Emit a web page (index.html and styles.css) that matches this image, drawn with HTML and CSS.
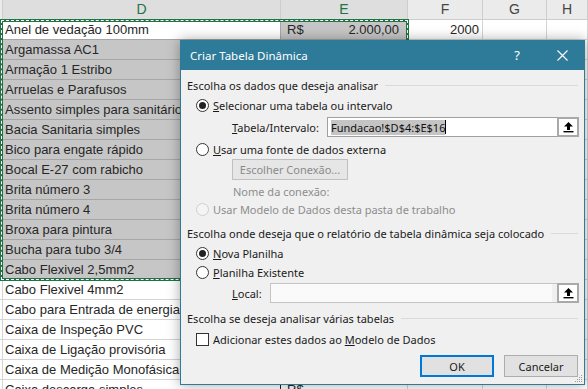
FILE: index.html
```html
<!DOCTYPE html>
<html lang="pt-BR">
<head>
    <meta charset="UTF-8">
    <title>Criar Tabela Dinâmica</title>
    <link rel="stylesheet" href="styles.css">
</head>
<body>
    <div class="sheet">
        <div class="row head">
            <div class="cell rh"></div>
            <div class="cell c-d on">D</div>
            <div class="cell c-e on">E</div>
            <div class="cell c-f">F</div>
            <div class="cell c-g">G</div>
            <div class="cell c-h">H</div>
        </div>
        <div class="row">
            <div class="cell rh"></div>
            <div class="cell c-d sel active">Anel de vedação 100mm</div>
            <div class="cell c-e sel money"><span>R$</span><span>2.000,00</span></div>
            <div class="cell c-f num">2000</div>
            <div class="cell c-g"></div>
            <div class="cell c-h"></div>
        </div>
        <div class="row"><div class="cell rh"></div><div class="cell c-d sel">Argamassa AC1</div><div class="cell c-e sel"></div><div class="cell c-f"></div><div class="cell c-g"></div><div class="cell c-h"></div></div>
        <div class="row"><div class="cell rh"></div><div class="cell c-d sel">Armação 1 Estribo</div><div class="cell c-e sel"></div><div class="cell c-f"></div><div class="cell c-g"></div><div class="cell c-h"></div></div>
        <div class="row"><div class="cell rh"></div><div class="cell c-d sel">Arruelas e Parafusos</div><div class="cell c-e sel"></div><div class="cell c-f"></div><div class="cell c-g"></div><div class="cell c-h"></div></div>
        <div class="row"><div class="cell rh"></div><div class="cell c-d sel">Assento simples para sanitário</div><div class="cell c-e sel"></div><div class="cell c-f"></div><div class="cell c-g"></div><div class="cell c-h"></div></div>
        <div class="row"><div class="cell rh"></div><div class="cell c-d sel">Bacia Sanitaria simples</div><div class="cell c-e sel"></div><div class="cell c-f"></div><div class="cell c-g"></div><div class="cell c-h"></div></div>
        <div class="row"><div class="cell rh"></div><div class="cell c-d sel">Bico para engate rápido</div><div class="cell c-e sel"></div><div class="cell c-f"></div><div class="cell c-g"></div><div class="cell c-h"></div></div>
        <div class="row"><div class="cell rh"></div><div class="cell c-d sel">Bocal E-27 com rabicho</div><div class="cell c-e sel"></div><div class="cell c-f"></div><div class="cell c-g"></div><div class="cell c-h"></div></div>
        <div class="row"><div class="cell rh"></div><div class="cell c-d sel">Brita número 3</div><div class="cell c-e sel"></div><div class="cell c-f"></div><div class="cell c-g"></div><div class="cell c-h"></div></div>
        <div class="row"><div class="cell rh"></div><div class="cell c-d sel">Brita número 4</div><div class="cell c-e sel"></div><div class="cell c-f"></div><div class="cell c-g"></div><div class="cell c-h"></div></div>
        <div class="row"><div class="cell rh"></div><div class="cell c-d sel">Broxa para pintura</div><div class="cell c-e sel"></div><div class="cell c-f"></div><div class="cell c-g"></div><div class="cell c-h"></div></div>
        <div class="row"><div class="cell rh"></div><div class="cell c-d sel">Bucha para tubo 3/4</div><div class="cell c-e sel"></div><div class="cell c-f"></div><div class="cell c-g"></div><div class="cell c-h"></div></div>
        <div class="row"><div class="cell rh"></div><div class="cell c-d sel">Cabo Flexivel 2,5mm2</div><div class="cell c-e sel"></div><div class="cell c-f"></div><div class="cell c-g"></div><div class="cell c-h"></div></div>
        <div class="row"><div class="cell rh"></div><div class="cell c-d edge">Cabo Flexivel 4mm2</div><div class="cell c-e"></div><div class="cell c-f"></div><div class="cell c-g"></div><div class="cell c-h"></div></div>
        <div class="row"><div class="cell rh"></div><div class="cell c-d edge">Cabo para Entrada de energia</div><div class="cell c-e"></div><div class="cell c-f"></div><div class="cell c-g"></div><div class="cell c-h"></div></div>
        <div class="row"><div class="cell rh"></div><div class="cell c-d edge">Caixa de Inspeção PVC</div><div class="cell c-e"></div><div class="cell c-f"></div><div class="cell c-g"></div><div class="cell c-h"></div></div>
        <div class="row"><div class="cell rh"></div><div class="cell c-d edge">Caixa de Ligação provisória</div><div class="cell c-e"></div><div class="cell c-f"></div><div class="cell c-g"></div><div class="cell c-h"></div></div>
        <div class="row"><div class="cell rh"></div><div class="cell c-d edge">Caixa de Medição Monofásica</div><div class="cell c-e"></div><div class="cell c-f"></div><div class="cell c-g"></div><div class="cell c-h"></div></div>
        <div class="row"><div class="cell rh"></div><div class="cell c-d edge">Caixa descarga simples</div><div class="cell c-e money"><span>R$</span></div><div class="cell c-f"></div><div class="cell c-g"></div><div class="cell c-h"></div></div>
    </div>

    <div class="ants"></div>

    <div class="dialog">
        <div class="dlg-title">
            <span class="dlg-name">Criar Tabela Dinâmica</span>
            <span class="help">?</span>
            <span class="close">
                <svg width="11" height="11" viewBox="0 0 11 11"><path d="M0.5 0.5 L10.5 10.5 M10.5 0.5 L0.5 10.5" stroke="#fff" stroke-width="1.1"/></svg>
            </span>
        </div>
        <div class="dlg-body">
            <div class="grp">Escolha os dados que deseja analisar</div>
            <div class="opt mt2"><span class="radio on"></span><span><u>S</u>elecionar uma tabela ou intervalo</span></div>
            <div class="field mt2">
                <span class="field-label"><u>T</u>abela/Intervalo:</span>
                <div class="ref-box">
                    <span class="ref-text"><span class="hl">Fundacao!$D$4:$E$16</span><span class="caret"></span></span>
                    <span class="ref-btn">
                        <svg width="11" height="12" viewBox="0 0 11 12"><path d="M5.5 1 L10 5.5 L7 5.5 L7 9 L4 9 L4 5.5 L1 5.5 Z" fill="#000"/><rect x="0.5" y="10" width="10" height="1.4" fill="#000"/></svg>
                    </span>
                </div>
            </div>
            <div class="opt mt2"><span class="radio"></span><span><u>U</u>sar uma fonte de dados externa</span></div>
            <div class="conn-btn">Escolher Conexão...</div>
            <div class="conn-name">Nome da conexão:</div>
            <div class="opt short disabled"><span class="radio"></span><span>Usar Modelo de Dados desta pasta de trabalho</span></div>

            <div class="grp mt7">Escolha onde deseja que o relatório de tabela dinâmica seja colocado</div>
            <div class="opt mt2"><span class="radio on"></span><span><u>N</u>ova Planilha</span></div>
            <div class="opt short"><span class="radio"></span><span><u>P</u>lanilha Existente</span></div>
            <div class="field local mt2">
                <span class="field-label"><u>L</u>ocal:</span>
                <div class="ref-box grey">
                    <span class="ref-fill"></span>
                    <span class="ref-btn">
                        <svg width="11" height="12" viewBox="0 0 11 12"><path d="M5.5 1 L10 5.5 L7 5.5 L7 9 L4 9 L4 5.5 L1 5.5 Z" fill="#000"/><rect x="0.5" y="10" width="10" height="1.4" fill="#000"/></svg>
                    </span>
                </div>
            </div>

            <div class="grp mt7">Escolha se deseja analisar várias tabelas</div>
            <div class="opt mt3"><span class="chk"></span><span>Adicionar estes dados ao <u>M</u>odelo de Dados</span></div>

            <div class="actions">
                <button class="btn ok">OK</button>
                <button class="btn">Cancelar</button>
            </div>
        </div>
        <svg class="grip" width="10" height="10" viewBox="0 0 10 10">
            <rect x="8" y="2" width="1" height="1" fill="#9a9a9a"/>
            <rect x="6" y="4" width="1" height="1" fill="#9a9a9a"/>
            <rect x="8" y="4" width="1" height="1" fill="#9a9a9a"/>
            <rect x="4" y="6" width="1" height="1" fill="#9a9a9a"/>
            <rect x="6" y="6" width="1" height="1" fill="#9a9a9a"/>
            <rect x="8" y="6" width="1" height="1" fill="#9a9a9a"/>
            <rect x="2" y="8" width="1" height="1" fill="#9a9a9a"/>
            <rect x="4" y="8" width="1" height="1" fill="#9a9a9a"/>
            <rect x="6" y="8" width="1" height="1" fill="#9a9a9a"/>
            <rect x="8" y="8" width="1" height="1" fill="#9a9a9a"/>
        </svg>
    </div>
</body>
</html>
```

FILE: styles.css
```css
body {
    margin: 0;
    width: 588px;
    height: 389px;
    overflow: hidden;
    position: relative;
    background: #fff;
    font-family: "Liberation Sans", Arial, sans-serif;
}

/* planilha */
.row {
    display: flex;
    height: 20px;
}
.cell {
    box-sizing: border-box;
    height: 20px;
    padding: 0 2px;
    border-right: 1px solid #d4d4d4;
    border-bottom: 1px solid #d4d4d4;
    font-size: 13px;
    line-height: 19px;
    color: #262626;
    white-space: nowrap;
    overflow: hidden;
    flex-shrink: 0;
}
.rh {
    width: 3px;
    padding: 0;
}
.c-d { width: 278px; }
.c-e { width: 127px; }
.c-f { width: 75px; }
.c-g { width: 64px; }
.c-h { flex: 1; }

.head .cell {
    background: #ebebeb;
    border-color: #cdcdcd;
    text-align: center;
    font-size: 14px;
    color: #444;
}
.head .rh {
    background: #ebebeb;
}
.head .on {
    background: #dedede;
    color: #217346;
}
.sel {
    background: #c6c6c6;
    border-color: #a6a6a6;
}
.sel.active {
    background: #fff;
    border-bottom-color: #a6a6a6;
}
.edge {
    border-right-color: #222;
}
.money {
    display: flex;
    justify-content: space-between;
    padding: 0 8px 0 6px;
}
.num {
    text-align: right;
    padding-right: 3px;
}

.ants {
    position: absolute;
    left: 0;
    top: 19px;
    width: 409px;
    height: 262px;
    box-sizing: border-box;
    border: 3px solid #217346;
}
.ants::after {
    content: "";
    position: absolute;
    inset: -2px;
    border: 1px dashed #fff;
}

/* caixa de dialogo */
.dialog {
    position: absolute;
    left: 180px;
    top: 40px;
    width: 405px;
    height: 345px;
    box-sizing: border-box;
    background: #f0f0f0;
    border: 1px solid #2d7b99;
    border-top: none;
    box-shadow: 0 0 12px rgba(0, 0, 0, 0.35);
    font-family: "Noto Sans", sans-serif;
    font-size: 11px;
    color: #1a1a1a;
}
.dlg-title {
    display: flex;
    align-items: center;
    height: 30px;
    padding-left: 9px;
    background: #2d7b99;
    color: #fff;
    font-size: 11.5px;
}
.help {
    margin-left: auto;
    width: 46px;
    text-align: center;
    font-size: 13px;
}
.close {
    width: 44px;
    display: flex;
    justify-content: center;
}
.dlg-body {
    padding: 7px 6px 0 6px;
}
.mt2 { margin-top: 2px; }
.mt3 { margin-top: 3px; }
.mt7 { margin-top: 7px; }

.grp {
    display: flex;
    align-items: center;
    height: 16px;
}
.grp::after {
    content: "";
    flex: 1;
    height: 1px;
    margin-left: 7px;
    background: #dadada;
}
.opt {
    display: flex;
    align-items: center;
    gap: 4px;
    height: 20px;
    padding-left: 9px;
}
.opt.short {
    height: 18px;
}
.disabled {
    color: #8d8d8d;
}
.radio,
.chk {
    box-sizing: border-box;
    width: 13px;
    height: 13px;
    border: 1px solid #333;
    background: #fff;
    position: relative;
    flex-shrink: 0;
}
.radio {
    border-radius: 50%;
}
.radio.on::after {
    content: "";
    position: absolute;
    left: 2px;
    top: 2px;
    width: 7px;
    height: 7px;
    border-radius: 50%;
    background: #222;
}
.disabled .radio {
    border-color: #cfcfcf;
    background: #f4f4f4;
}

.field {
    display: flex;
    align-items: center;
    height: 20px;
    padding-left: 45px;
}
.field-label {
    width: 95px;
}
.local .field-label {
    width: 38px;
}
.ref-box {
    flex: 1;
    display: flex;
    align-items: stretch;
    height: 20px;
    box-sizing: border-box;
    border: 1px solid #a0a0a0;
    background: #fff;
    margin-right: -1px;
}
.ref-box.grey {
    border-color: #c4c4c4;
    background: #f0f0f0;
}
.ref-fill {
    flex: 1;
    margin-right: 5px;
    background: #fafafa;
}
.ref-text {
    display: flex;
    align-items: center;
    padding-left: 3px;
    color: #111;
}
.hl {
    background: #c4c4c4;
}
.caret {
    width: 1px;
    height: 14px;
    background: #000;
}
.ref-btn {
    margin: -1px -1px -1px auto;
    width: 22px;
    box-sizing: border-box;
    border: 2px solid #a9a9a9;
    background: #fff;
    display: flex;
    align-items: center;
    justify-content: center;
}
.conn-btn {
    box-sizing: border-box;
    width: 116px;
    height: 21px;
    margin-left: 45px;
    border: 1px solid #c0c0c0;
    background: #e6e6e6;
    color: #8a8a8a;
    text-align: center;
    line-height: 19px;
}
.conn-name {
    height: 16px;
    line-height: 16px;
    margin-top: 4px;
    padding-left: 46px;
    color: #8d8d8d;
}

.actions {
    display: flex;
    justify-content: flex-end;
    gap: 10px;
    margin-top: 6px;
}
.btn {
    box-sizing: border-box;
    width: 74px;
    height: 22px;
    border: 1px solid #adadad;
    background: #e1e1e1;
    font-family: inherit;
    font-size: 11px;
    color: #1a1a1a;
    padding: 0;
}
.btn.ok {
    border: 2px solid #0078d7;
}
.grip {
    position: absolute;
    right: 1px;
    bottom: 1px;
}
```
